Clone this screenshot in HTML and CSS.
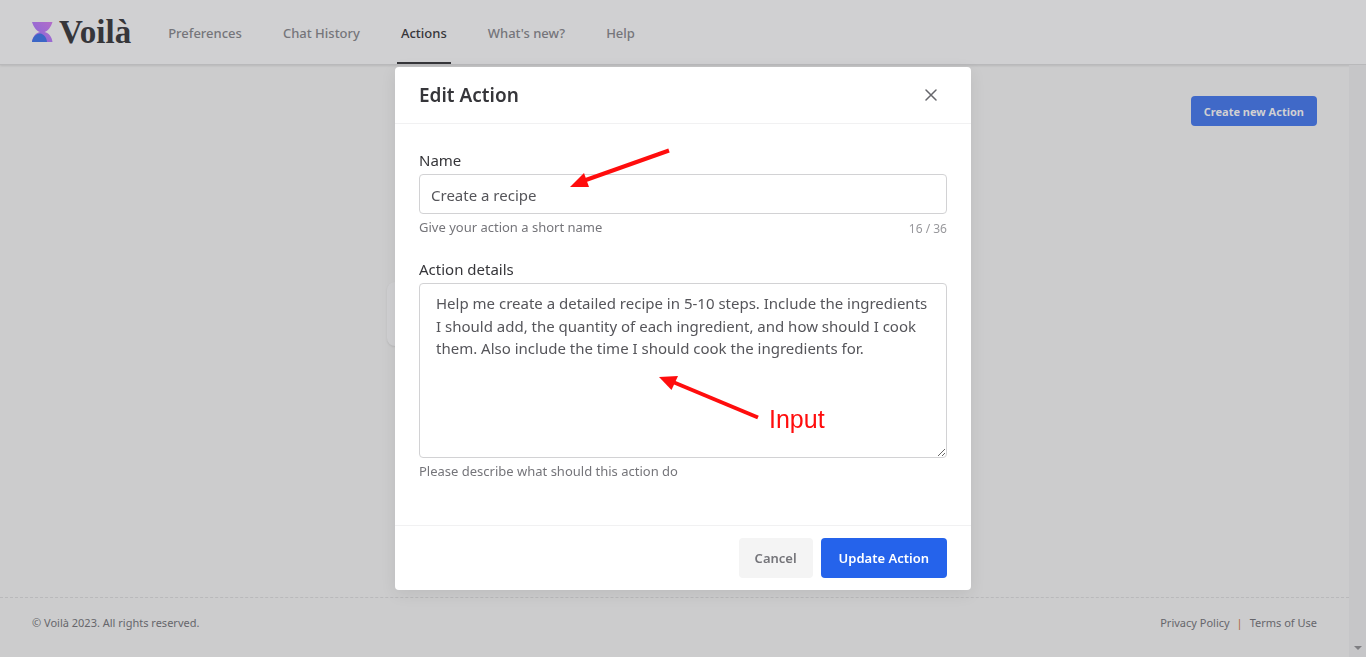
FILE: index.html
```html
<!DOCTYPE html>
<html lang="en">
<head>
<meta charset="UTF-8">
<meta name="viewport" content="width=device-width, initial-scale=1.0">
<title>Voilà - Actions</title>
<link rel="stylesheet" href="styles.css">
</head>
<body>
    <header class="topbar">
        <a class="logo" href="#">
            <svg width="21" height="20" viewBox="0 0 21 20" aria-hidden="true">
                <defs>
                    <linearGradient id="glass" x1="1" y1="0" x2="0" y2="1">
                        <stop offset="0" stop-color="#b46cc8"/>
                        <stop offset="0.5" stop-color="#9a6ad2"/>
                        <stop offset="1" stop-color="#8a66cc"/>
                    </linearGradient>
                </defs>
                <path fill="url(#glass)" d="M0 0h20.500C19 5 16 9 12.500 10C17 11 20 15 20.500 20H0C0.500 15 3.500 11 8 10C4.500 9 1.500 5 0 0z"/>
                <path fill="#3b66c6" d="M0 20C0.500 15.500 4 11.500 8 11.500C12 12 14.500 15.500 15 20z"/>
            </svg>
            <span>Voilà</span>
        </a>
        <nav class="nav">
            <a href="#">Preferences</a>
            <a href="#">Chat History</a>
            <a href="#" class="active">Actions</a>
            <a href="#">What's new?</a>
            <a href="#">Help</a>
        </nav>
    </header>

    <div class="page">
        <div class="content">
            <main>
                <div class="toolbar">
                    <button type="button" class="btn-create">Create new Action</button>
                </div>
                <div class="action-card"></div>
            </main>
            <footer class="footer">
                <span>© Voilà 2023. All rights reserved.</span>
                <div class="links">
                    <a href="#">Privacy Policy</a>
                    <span class="sep">|</span>
                    <a href="#">Terms of Use</a>
                </div>
            </footer>
        </div>
        <div class="scrollbar">
            <svg width="8" height="4" viewBox="0 0 8 4" aria-hidden="true"><path d="M0 0h8L4 4z" fill="#7e7e82"/></svg>
        </div>
    </div>

    <div class="overlay">
        <form class="modal" role="dialog" aria-labelledby="modal-title">
            <div class="modal-header">
                <h1 id="modal-title">Edit Action</h1>
                <button type="button" class="close" aria-label="Close">
                    <svg width="12" height="12" viewBox="0 0 12 12" fill="none" stroke="#66666b" stroke-width="1.500" stroke-linecap="round"><path d="M1 1l10 10M11 1L1 11"/></svg>
                </button>
            </div>
            <div class="modal-body">
                <div class="field">
                    <label for="name">Name</label>
                    <input type="text" id="name" name="name" maxlength="36" value="Create a recipe">
                    <div class="help">
                        <span>Give your action a short name</span>
                        <span class="counter">16 / 36</span>
                    </div>
                </div>
                <div class="field">
                    <label for="details">Action details</label>
                    <textarea id="details" name="details">Help me create a detailed recipe in 5-10 steps. Include the ingredients I should add, the quantity of each ingredient, and how should I cook them. Also include the time I should cook the ingredients for.</textarea>
                    <div class="help">
                        <span>Please describe what should this action do</span>
                    </div>
                </div>
            </div>
            <div class="modal-footer">
                <button type="button" class="btn btn-cancel">Cancel</button>
                <button type="submit" class="btn btn-primary">Update Action</button>
            </div>

            <!-- arrows and note over the form -->
            <svg class="notes" width="576" height="523" viewBox="0 0 576 523">
                <g stroke="#ff0d0d" stroke-width="4" stroke-linecap="butt">
                    <path d="M274 83.500L188 114"/>
                    <path d="M363 350.500L278 315"/>
                </g>
                <g fill="#ff0d0d">
                    <path d="M175 120L189 106L194 120z"/>
                    <path d="M264 310L283 309L276.500 323z"/>
                    <text x="374" y="361">Input</text>
                </g>
            </svg>
        </form>
    </div>
</body>
</html>
```

FILE: styles.css
```css
* {
    margin: 0;
    padding: 0;
    box-sizing: border-box;
}
body {
    display: flex;
    flex-direction: column;
    min-height: 100vh;
    font-family: 'Noto Sans', 'Open Sans', sans-serif;
    background-color: #cccccd;
    color: #36363a;
}
a {
    color: inherit;
    text-decoration: none;
}
button, input, textarea {
    font-family: inherit;
}
button {
    border: none;
    border-radius: 4px;
    cursor: pointer;
}
.topbar {
    display: flex;
    gap: 33px;
    height: 65px;
    padding-left: 32px;
    background-color: #d0d0d2;
    border-bottom: 1px solid #b9b9bb;
    box-shadow: 0 1px 2px rgba(0, 0, 0, 0.1);
}
.logo {
    display: flex;
    align-items: center;
    gap: 6px;
    font-family: 'Liberation Serif', serif;
    font-size: 33px;
    line-height: 32px;
    font-weight: bold;
}
.nav {
    display: flex;
    gap: 33px;
}
.nav a {
    display: flex;
    align-items: center;
    padding: 4px 4px 0;
    border-bottom: 2px solid transparent;
    font-size: 13px;
    font-weight: 500;
    color: #75757a;
}
.nav a.active {
    color: #36363a;
    border-bottom-color: #36363a;
}
.page {
    display: flex;
    flex: 1;
}
.content {
    display: flex;
    flex: 1;
    flex-direction: column;
}
main {
    flex: 1;
    padding: 31px 32px;
}
.toolbar {
    display: flex;
    justify-content: flex-end;
}
.btn-create {
    height: 30px;
    padding: 0 13px;
    font-size: 11px;
    font-weight: 700;
    color: #d0d0d2;
    background-color: #4069c8;
}
.action-card {
    max-width: 576px;
    height: 64px;
    margin: 156px auto 0;
    border-radius: 8px;
    background-color: #d0d0d2;
    box-shadow: 0 1px 2px rgba(0, 0, 0, 0.1);
}
.footer {
    display: flex;
    justify-content: space-between;
    height: 60px;
    padding: 16px 32px;
    border-top: 1px dashed #b9b9bb;
    font-size: 11px;
    line-height: 18px;
    color: #66666b;
}
.links {
    display: flex;
    gap: 7px;
}
.sep {
    color: #b0663c;
}
.scrollbar {
    display: flex;
    align-items: flex-end;
    justify-content: center;
    width: 17px;
    padding-bottom: 7px;
    background-color: #c6c6c8;
}
.overlay {
    position: fixed;
    inset: 0;
    display: flex;
    align-items: center;
    justify-content: center;
}
.modal {
    position: relative;
    width: 100%;
    max-width: 576px;
    border-radius: 4px;
    background-color: #fff;
    box-shadow: 0 4px 16px rgba(0, 0, 0, 0.08);
}
.modal-header {
    display: flex;
    align-items: center;
    justify-content: space-between;
    height: 57px;
    padding: 0 24px;
    border-bottom: 1px solid #f1f1f2;
}
h1 {
    font-size: 19px;
    font-weight: 600;
}
.close {
    display: flex;
    align-items: center;
    justify-content: center;
    width: 32px;
    height: 32px;
    background: none;
}
.modal-body {
    padding: 24px;
}
.field {
    margin-bottom: 18px;
}
label {
    display: block;
    margin-bottom: 2px;
    font-size: 15px;
    line-height: 24px;
}
input, textarea {
    display: block;
    width: 100%;
    border: 1px solid #d2d2d4;
    border-radius: 4px;
    font-size: 15px;
    color: #55555a;
    background-color: #fff;
}
input {
    height: 40px;
    padding: 2px 11px 0;
}
textarea {
    height: 175px;
    padding: 8px 16px;
    line-height: 1.5;
    resize: vertical;
}
.help {
    display: flex;
    justify-content: space-between;
    height: 25px;
    padding-top: 1px;
    font-size: 13px;
    line-height: 24px;
    color: #75757a;
}
.counter {
    font-size: 12px;
    line-height: 28px;
    color: #98989c;
}
.modal-footer {
    display: flex;
    justify-content: flex-end;
    gap: 8px;
    padding: 12px 24px;
    border-top: 1px solid #f1f1f2;
}
.btn {
    height: 40px;
    padding: 0 16px;
    font-size: 13px;
    font-weight: 600;
}
.btn-cancel {
    color: #75757a;
    background-color: #f4f4f4;
}
.btn-primary {
    padding: 0 18px;
    color: #fff;
    background-color: #2563eb;
}
.notes {
    position: absolute;
    top: 0;
    left: 0;
    pointer-events: none;
}
.notes text {
    font-family: 'Liberation Sans', Arial, sans-serif;
    font-size: 25px;
}
```
